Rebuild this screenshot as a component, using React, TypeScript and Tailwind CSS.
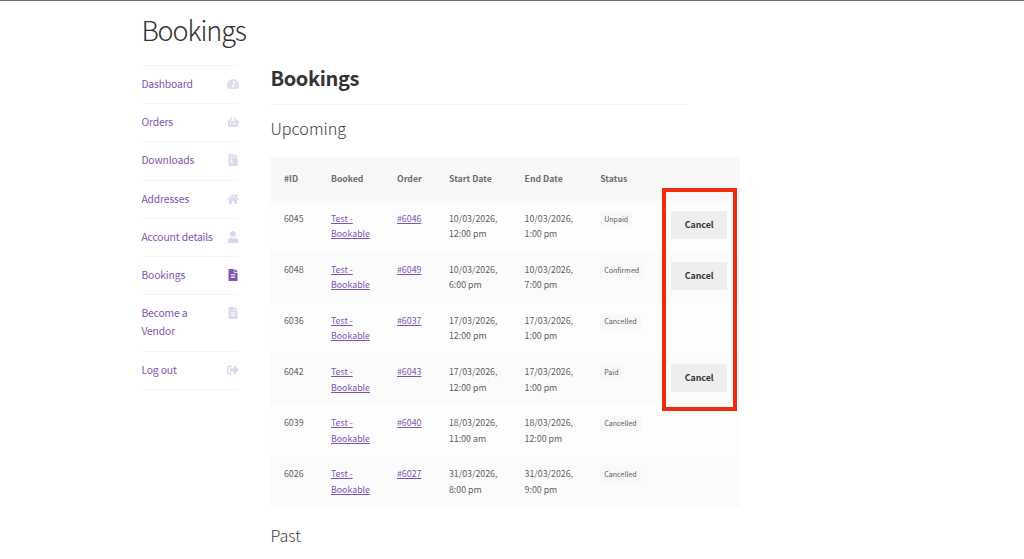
import type { IconType } from "react-icons";
import {
  FaTachometerAlt,
  FaShoppingBasket,
  FaFileArchive,
  FaHome,
  FaUser,
  FaFileAlt,
  FaSignOutAlt,
} from "react-icons/fa";

type NavItem = { label: string; icon: IconType; active?: boolean };

const navItems: NavItem[] = [
  { label: "Dashboard", icon: FaTachometerAlt },
  { label: "Orders", icon: FaShoppingBasket },
  { label: "Downloads", icon: FaFileArchive },
  { label: "Addresses", icon: FaHome },
  { label: "Account details", icon: FaUser },
  { label: "Bookings", icon: FaFileAlt, active: true },
  { label: "Become a Vendor", icon: FaFileAlt },
  { label: "Log out", icon: FaSignOutAlt },
];

type Booking = {
  id: string;
  order: string;
  start: [string, string];
  end: [string, string];
  status: string;
  cancellable?: boolean;
};

const bookings: Booking[] = [
  { id: "6045", order: "#6046", start: ["10/03/2026,", "12:00 pm"], end: ["10/03/2026,", "1:00 pm"], status: "Unpaid", cancellable: true },
  { id: "6048", order: "#6049", start: ["10/03/2026,", "6:00 pm"], end: ["10/03/2026,", "7:00 pm"], status: "Confirmed", cancellable: true },
  { id: "6036", order: "#6037", start: ["17/03/2026,", "12:00 pm"], end: ["17/03/2026,", "1:00 pm"], status: "Cancelled" },
  { id: "6042", order: "#6043", start: ["17/03/2026,", "12:00 pm"], end: ["17/03/2026,", "1:00 pm"], status: "Paid", cancellable: true },
  { id: "6039", order: "#6040", start: ["18/03/2026,", "11:00 am"], end: ["18/03/2026,", "12:00 pm"], status: "Cancelled" },
  { id: "6026", order: "#6027", start: ["31/03/2026,", "8:00 pm"], end: ["31/03/2026,", "9:00 pm"], status: "Cancelled" },
];

const columns = "grid grid-cols-[47px_66px_52px_75.6px_75.6px_71px_1fr] pl-[13.6px]";

function Sidebar() {
  return (
    <nav className="mt-[13px] w-[98px] border-t border-[#f5f5f5]">
      <ul>
        {navItems.map(({ label, icon: Icon, active }) => (
          <li
            key={label}
            className="flex items-start justify-between border-b border-[#f5f5f5] pt-[8.9px] pb-[10.35px] text-[10.3px] leading-[18px] text-[#7f54b3]"
          >
            <span className={label === "Become a Vendor" ? "w-[60px] tracking-[-0.12px]" : "whitespace-nowrap tracking-[-0.12px]"}>{label}</span>
            <span className={active ? "flex h-[18px] items-center" : "flex h-[18px] items-center text-[#ddd7ee]"}>
              <Icon className="h-[12px] w-auto" />
            </span>
          </li>
        ))}
      </ul>
    </nav>
  );
}

function BookingRow({ booking, even }: { booking: Booking; even: boolean }) {
  return (
    <div className={`${columns} h-[51.15px] pt-[10px] text-[8.8px] leading-[15.6px] text-[#606060] ${even ? "bg-[#fbfbfb]" : "bg-[#fdfdfd]"}`}>
      <span>{booking.id}</span>
      <a className="text-[#7f54b3] underline">
        Test -<br />
        Bookable
      </a>
      <a className="text-[#7f54b3] underline">{booking.order}</a>
      <span>
        {booking.start[0]}
        <br />
        {booking.start[1]}
      </span>
      <span>
        {booking.end[0]}
        <br />
        {booking.end[1]}
      </span>
      <span>
        <span className="inline-block bg-[#f8f8f8] px-1 text-[7.1px] leading-[15px]">{booking.status}</span>
      </span>
      <span>
        {booking.cancellable && (
          <button className="block h-7 w-14 bg-[#eeeeee] text-[8.8px] leading-7 font-bold text-[#333333]">Cancel</button>
        )}
      </span>
    </div>
  );
}

export default function App() {
  return (
    <div className="h-[559px] overflow-hidden border-t border-[#6f6f6f] bg-white font-['Noto_Sans_CJK_SC',sans-serif] text-[#404040]">
      <div className="pt-[9px] pl-[141.4px]">
        <h1 className="h-[42px] text-[27px] leading-[40px] font-light tracking-[-1.1px] text-[#333333]">Bookings</h1>
        <div className="flex items-start">
          <Sidebar />
          <main className="ml-[31px] w-[470px] pt-[10px]">
            <h2 className="h-[43px] w-[418px] border-b border-[#f5f5f5] text-[20px] leading-[32px] font-bold tracking-[-0.35px] text-[#333333]">Bookings</h2>
            <h3 className="mt-[9px] h-[29px] text-[16.2px] leading-[29px] font-light">Upcoming</h3>
            <section className="relative mt-[14px]">
              <div className={`${columns} h-[43.6px] bg-[#f8f8f8] text-[8.7px] leading-[43.6px] font-bold text-[#6d6d6d]`}>
                <span>#ID</span>
                <span>Booked</span>
                <span>Order</span>
                <span>Start Date</span>
                <span>End Date</span>
                <span>Status</span>
              </div>
              {bookings.map((booking, index) => (
                <BookingRow key={booking.id} booking={booking} even={index % 2 === 1} />
              ))}
              <div className="absolute top-[31px] left-[391.4px] h-[223px] w-[75.6px] border-4 border-[#eb2d0d]" />
            </section>
            <h3 className="mt-[13px] h-[30px] text-[16.2px] leading-[30px] font-light">Past</h3>
          </main>
        </div>
      </div>
    </div>
  );
}
